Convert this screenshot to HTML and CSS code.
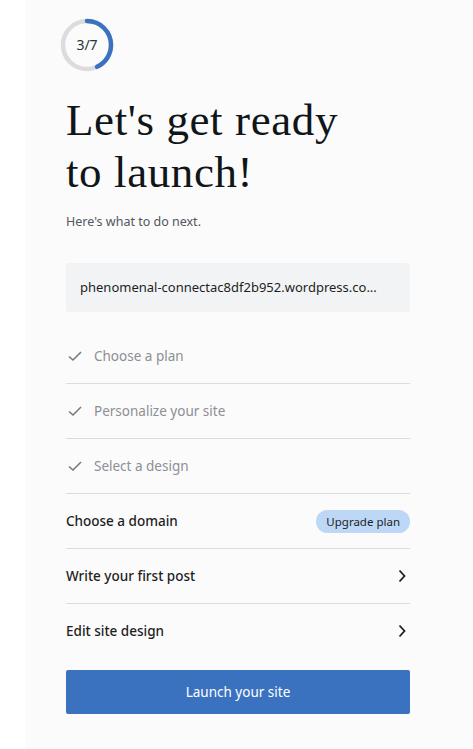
FILE: index.html
```html
<!DOCTYPE html>
<html lang="en">
  <head>
    <meta charset="UTF-8" />
    <meta name="viewport" content="width=device-width, initial-scale=1.0" />
    <title>Launchpad</title>
    <link rel="stylesheet" href="styles.css">
  </head>
  <body>
    <div class="panel">
      <div class="progress">
        <svg width="54" height="54" viewBox="0 0 54 54">
          <circle cx="27" cy="27" r="24" fill="none" stroke="#dcdcde" stroke-width="4.5" />
          <circle cx="27" cy="27" r="24" fill="none" stroke="#3b72c0" stroke-width="4.5"
            stroke-linecap="round" stroke-dasharray="64.6 150.8" transform="rotate(-90 27 27)" />
        </svg>
        <span class="progress-text">3/7</span>
      </div>

      <h1 class="title">Let's get ready<br>to launch!</h1>
      <p class="subtitle">Here's what to do next.</p>

      <div class="site-url">phenomenal-connectac8df2b952.wordpress.co...</div>

      <ul class="checklist">
        <li class="task done">
          <svg class="check" width="16" height="16" viewBox="0 0 16 16"><path d="M2 8.5l4 3.5 8-8" fill="none" stroke="#72777c" stroke-width="1.5" /></svg>
          <span>Choose a plan</span>
        </li>
        <li class="task done">
          <svg class="check" width="16" height="16" viewBox="0 0 16 16"><path d="M2 8.5l4 3.5 8-8" fill="none" stroke="#72777c" stroke-width="1.5" /></svg>
          <span>Personalize your site</span>
        </li>
        <li class="task done">
          <svg class="check" width="16" height="16" viewBox="0 0 16 16"><path d="M2 8.5l4 3.5 8-8" fill="none" stroke="#72777c" stroke-width="1.5" /></svg>
          <span>Select a design</span>
        </li>
        <li class="task">
          <span>Choose a domain</span>
          <span class="badge">Upgrade plan</span>
        </li>
        <li class="task">
          <span>Write your first post</span>
          <svg class="chevron" width="10" height="14" viewBox="0 0 10 14"><path d="M2.5 1.5l5 5.5-5 5.5" fill="none" stroke="#1e1e1e" stroke-width="1.8" /></svg>
        </li>
        <li class="task">
          <span>Edit site design</span>
          <svg class="chevron" width="10" height="14" viewBox="0 0 10 14"><path d="M2.5 1.5l5 5.5-5 5.5" fill="none" stroke="#1e1e1e" stroke-width="1.8" /></svg>
        </li>
      </ul>

      <button class="launch">Launch your site</button>
    </div>
  </body>
</html>
```

FILE: styles.css
```css
body {
  margin: 0;
  padding: 0;
  background-color: #ffffff;
  font-family: "Noto Sans", "Open Sans", sans-serif;
  color: #1e1e1e;
}
.panel {
  margin-left: 25px;
  min-height: 749px;
  box-sizing: border-box;
  background-color: #fbfbfb;
  padding: 18px 63px 0 41px;
}
.progress {
  position: relative;
  width: 54px;
  height: 54px;
  margin-left: -6px;
}
.progress svg {
  display: block;
}
.progress-text {
  position: absolute;
  top: 0;
  left: 0;
  width: 54px;
  line-height: 54px;
  text-align: center;
  font-size: 14px;
  color: #2c3338;
}
.title {
  margin: 22px 0 0;
  font-family: "Liberation Serif", serif;
  font-weight: normal;
  font-size: 45px;
  line-height: 52px;
  letter-spacing: 0.6px;
  color: #101517;
}
.subtitle {
  margin: 15px 0 0;
  font-size: 12.5px;
  color: #50575e;
}
.site-url {
  margin-top: 33px;
  height: 49px;
  line-height: 49px;
  padding: 0 14px;
  background-color: #f2f3f4;
  border-radius: 3px;
  font-size: 13px;
  color: #1e1e1e;
  white-space: nowrap;
}
.checklist {
  list-style: none;
  margin: 17px 0 0;
  padding: 0;
}
.task {
  display: flex;
  align-items: center;
  height: 54px;
  border-bottom: 1px solid #dcdcde;
  font-size: 13.5px;
  font-weight: 500;
  color: #1e1e1e;
}
.task:last-child {
  border-bottom: none;
}
.task span:first-child {
  flex: 1;
}
.task.done {
  font-weight: normal;
  color: #8c8f94;
}
.check {
  margin: 0 11px 0 1px;
}
.badge {
  background-color: #bdd8f6;
  border-radius: 12px;
  padding: 4px 10px;
  font-size: 11.5px;
  font-weight: normal;
  color: #1d2327;
}
.chevron {
  margin-right: 3px;
}
.launch {
  display: block;
  width: 100%;
  height: 44px;
  margin-top: 12px;
  background-color: #3b72c0;
  color: #ffffff;
  border: none;
  border-radius: 2px;
  font-family: "Noto Sans", "Open Sans", sans-serif;
  font-size: 13.5px;
  cursor: pointer;
}
```
